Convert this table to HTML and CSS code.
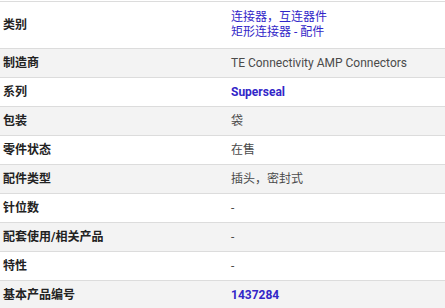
FILE: index.html
```html
<!DOCTYPE html>
<html lang="zh-CN">
<head>
<meta charset="utf-8">
<link rel="stylesheet" href="styles.css">
</head>
<body>
<div class="attrs">
  <div class="row tall">
    <div class="label">类别</div>
    <div class="value"><a class="link" href="#">连接器，互连器件</a><a class="link" href="#">矩形连接器 - 配件</a></div>
  </div>
  <div class="row alt">
    <div class="label">制造商</div>
    <div class="value">TE Connectivity AMP Connectors</div>
  </div>
  <div class="row">
    <div class="label">系列</div>
    <div class="value"><a class="link bold" href="#">Superseal</a></div>
  </div>
  <div class="row alt">
    <div class="label">包装</div>
    <div class="value">袋</div>
  </div>
  <div class="row">
    <div class="label">零件状态</div>
    <div class="value">在售</div>
  </div>
  <div class="row alt">
    <div class="label">配件类型</div>
    <div class="value">插头，密封式</div>
  </div>
  <div class="row">
    <div class="label">针位数</div>
    <div class="value">-</div>
  </div>
  <div class="row alt">
    <div class="label">配套使用/相关产品</div>
    <div class="value">-</div>
  </div>
  <div class="row">
    <div class="label">特性</div>
    <div class="value">-</div>
  </div>
  <div class="row alt">
    <div class="label">基本产品编号</div>
    <div class="value"><a class="link bold" href="#">1437284</a></div>
  </div>
</div>
</body>
</html>
```
FILE: styles.css
```css
html, body {
  margin: 0;
  padding: 0;
  background: #ffffff;
}
body {
  padding-top: 1px;
  font-family: Roboto, "Noto Sans CJK SC", sans-serif;
  font-size: 12px;
  color: #222;
}
.attrs {
  display: flex;
  flex-direction: column;
}
.row {
  display: grid;
  grid-template-columns: 228px 1fr;
  align-items: center;
  height: 28px;
  border-top: 1px solid #dcdcdc;
  background: #ffffff;
}
.row.tall {
  height: 46px;
}
.row.alt {
  background: #f3f3f3;
}
.label {
  padding-left: 3px;
  font-weight: 700;
  color: #222;
  line-height: 16px;
}
.value {
  padding-left: 3px;
  color: #4a4a4a;
  line-height: 16px;
  display: flex;
  flex-direction: column;
}
.link {
  color: #3226c8;
  text-decoration: none;
  line-height: 15px;
}
.link.bold {
  font-weight: 700;
  line-height: 16px;
}
```
